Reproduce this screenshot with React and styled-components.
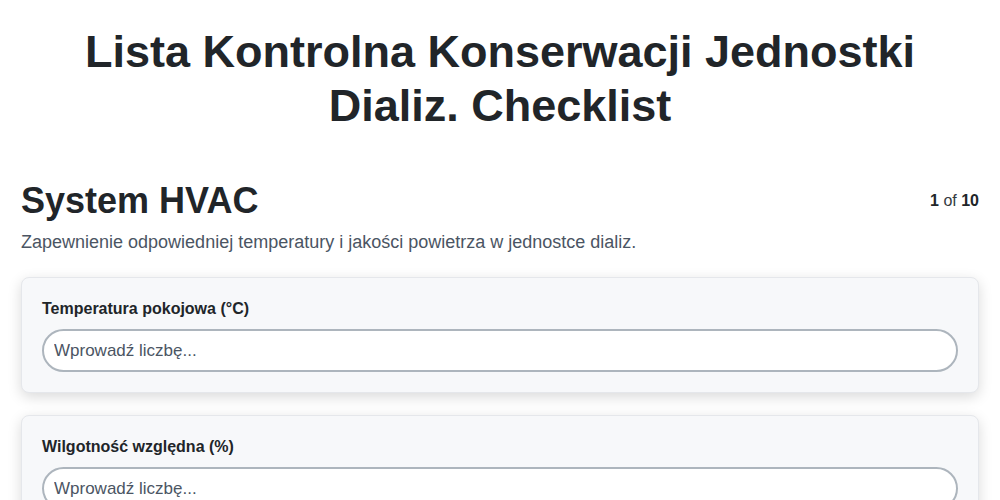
import React from 'react';
import styled, { createGlobalStyle } from 'styled-components';

const GlobalStyle = createGlobalStyle`
  body {
    margin: 0;
    background: #ffffff;
    font-family: "Liberation Sans", Arial, sans-serif;
    color: #212529;
  }
`;

const Page = styled.div`
  padding: 25px 21px 40px;
`;

const Title = styled.h1`
  max-width: 880px;
  margin: 0 auto 46px;
  text-align: center;
  font-size: 45px;
  line-height: 54px;
  font-weight: 700;
  color: #212529;
`;

const SectionHeader = styled.div`
  display: flex;
  align-items: center;
  justify-content: space-between;
`;

const SectionTitle = styled.h2`
  margin: 0;
  font-size: 36px;
  line-height: 1.2;
  font-weight: 700;
`;

const Progress = styled.div`
  font-size: 16px;
  color: #343a40;

  b {
    color: #212529;
  }
`;

const Description = styled.p`
  margin: 8px 0 22px;
  font-size: 18px;
  line-height: 1.4;
  color: #4b5563;
`;

const Card = styled.div`
  background: #f7f8fa;
  border: 1px solid #e5e7eb;
  border-radius: 8px;
  padding: 20px;
  margin-bottom: 22px;
  box-shadow: 0 4px 14px rgba(0, 0, 0, 0.15);
`;

const Label = styled.label`
  display: block;
  margin-bottom: 9px;
  font-size: 16px;
  line-height: 22px;
  font-weight: 700;
  color: #212529;
`;

const Input = styled.input`
  display: block;
  box-sizing: border-box;
  width: 100%;
  height: 43px;
  padding: 10px 10px;
  border: 2px solid #adb5bd;
  border-radius: 999px;
  background: #ffffff;
  font-family: "Liberation Sans", Arial, sans-serif;
  font-size: 17px;
  color: #212529;
  outline: none;

  &::placeholder {
    color: #4b5563;
  }
`;

const fields = [
  { label: 'Temperatura pokojowa (°C)' },
  { label: 'Wilgotność względna (%)' },
  { label: 'Stan filtrów powietrza' },
];

export default function App() {
  return (
    <Page>
      <GlobalStyle />
      <Title>Lista Kontrolna Konserwacji Jednostki Dializ. Checklist</Title>
      <SectionHeader>
        <SectionTitle>System HVAC</SectionTitle>
        <Progress>
          <b>1</b> of <b>10</b>
        </Progress>
      </SectionHeader>
      <Description>
        Zapewnienie odpowiedniej temperatury i jakości powietrza w jednostce dializ.
      </Description>
      {fields.map((f) => (
        <Card key={f.label}>
          <Label>{f.label}</Label>
          <Input type="number" placeholder="Wprowadź liczbę..." />
        </Card>
      ))}
    </Page>
  );
}
